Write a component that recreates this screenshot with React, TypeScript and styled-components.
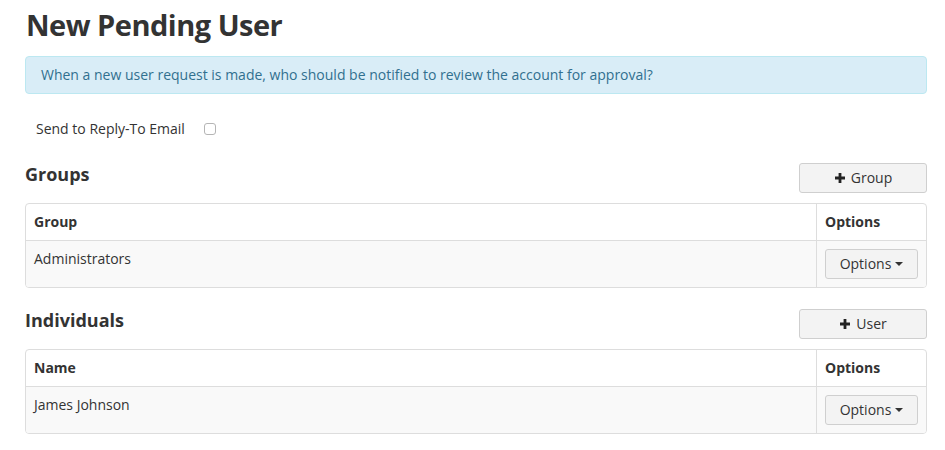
import styled, { createGlobalStyle } from 'styled-components';

const GlobalStyle = createGlobalStyle`
  body {
    margin: 0;
    background: #fff;
    color: #333;
    font-family: 'Open Sans', 'Liberation Sans', sans-serif;
    font-size: 14px;
    line-height: 20px;
  }
`;

const groups = ['Administrators'];
const people = ['James Johnson'];

export default function App() {
  return (
    <>
      <GlobalStyle />
      <Page>
        <Title>New Pending User</Title>
        <Alert>When a new user request is made, who should be notified to review the account for approval?</Alert>
        <CheckRow>
          <span>Send to Reply-To Email</span>
          <Checkbox type='checkbox' />
        </CheckRow>

        <Section title='Groups' add='Group' column='Group' rows={groups} />
        <Section title='Individuals' add='User' column='Name' rows={people} />
      </Page>
    </>
  );
}

function Section({ title, add, column, rows }: ISection) {
  return (
    <SectionView>
      <SectionHeader>
        <SectionTitle>{title}</SectionTitle>
        <Button $wide>
          <PlusIcon />
          {add}
        </Button>
      </SectionHeader>
      <TableFrame>
        <Table>
          <thead>
            <tr>
              <Th>{column}</Th>
              <Th $narrow>Options</Th>
            </tr>
          </thead>
          <tbody>
            {rows.map(row => (
              <tr key={row}>
                <Td>{row}</Td>
                <Td $narrow>
                  <Button>
                    Options
                    <Caret />
                  </Button>
                </Td>
              </tr>
            ))}
          </tbody>
        </Table>
      </TableFrame>
    </SectionView>
  );
}

interface ISection {
  title: string;
  add: string;
  column: string;
  rows: string[];
}

function PlusIcon() {
  return (
    <svg width='12' height='12' viewBox='0 0 12 12' aria-hidden>
      <path d='M6 1v10M1 6h10' stroke='#222' strokeWidth='2.8' />
    </svg>
  );
}

const Page = styled.main`
  width: 902px;
  margin-left: 25px;
  padding-top: 8px;
`;

const Title = styled.h1`
  margin: 0 0 14px 1px;
  font-size: 29px;
  line-height: 34px;
  font-weight: 700;
  letter-spacing: -0.5px;
  color: #333;
`;

const Alert = styled.div`
  padding: 8px 15px;
  background: #d9edf7;
  border: 1px solid #bce8f1;
  border-radius: 4px;
  color: #31708f;
`;

const CheckRow = styled.label`
  display: flex;
  align-items: center;
  gap: 19px;
  margin: 25px 0 0 11px;
  height: 20px;
`;

const Checkbox = styled.input`
  appearance: none;
  width: 12px;
  height: 12px;
  margin: 0;
  border: 1px solid #b5b5b5;
  border-radius: 3px;
  background: #fff;
`;

const SectionView = styled.section`
  margin-top: 24px;

  & + & {
    margin-top: 21px;
  }
`;

const SectionHeader = styled.div`
  display: flex;
  justify-content: space-between;
  align-items: flex-start;
  margin-bottom: 10px;
`;

const SectionTitle = styled.h2`
  margin: 0;
  font-size: 18px;
  line-height: 22px;
  font-weight: 700;
  color: #333;
`;

const Button = styled.button<{ $wide?: boolean }>`
  display: inline-flex;
  align-items: center;
  justify-content: center;
  gap: 5px;
  width: ${p => (p.$wide ? '128px' : '93px')};
  height: 30px;
  padding: 0;
  font: inherit;
  color: #333;
  background: #f3f3f3;
  border: 1px solid #cfcfcf;
  border-radius: 3px;
`;

const Caret = styled.span`
  width: 0;
  height: 0;
  margin-left: -1px;
  border-top: 4px solid #333;
  border-left: 4px solid transparent;
  border-right: 4px solid transparent;
`;

const TableFrame = styled.div`
  border: 1px solid #ddd;
  border-radius: 4px;
  overflow: hidden;
`;

const Table = styled.table`
  width: 100%;
  border-collapse: collapse;

  tbody tr {
    background: #f9f9f9;
  }
`;

const Th = styled.th<{ $narrow?: boolean }>`
  padding: 8px;
  text-align: left;
  font-weight: 700;
  border-bottom: 1px solid #ddd;
  border-left: ${p => (p.$narrow ? '1px solid #ddd' : 'none')};
  width: ${p => (p.$narrow ? '92px' : 'auto')};
`;

const Td = styled.td<{ $narrow?: boolean }>`
  padding: 8px;
  vertical-align: top;
  border-left: ${p => (p.$narrow ? '1px solid #ddd' : 'none')};
  width: ${p => (p.$narrow ? '92px' : 'auto')};
`;
